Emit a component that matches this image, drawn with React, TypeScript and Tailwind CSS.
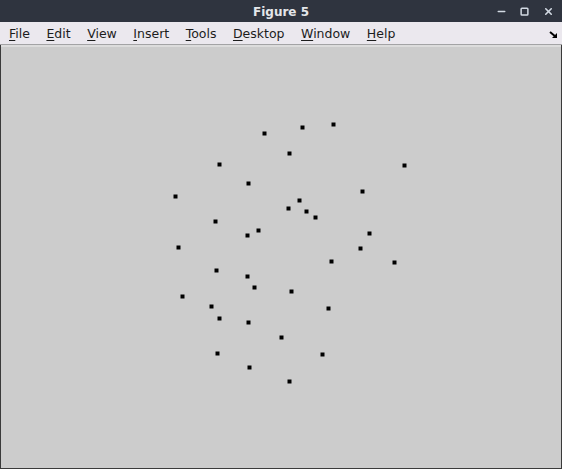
import { Minus, Square, X } from 'lucide-react';

const menus = ['File', 'Edit', 'View', 'Insert', 'Tools', 'Desktop', 'Window', 'Help'];

// marker positions in page coords (canvas starts at y=47)
const points: [number, number][] = [
  [264, 133], [302, 127], [333, 124], [289, 153], [219, 164], [404, 165],
  [248, 183], [362, 191], [175, 196], [299, 200], [288, 208], [306, 211],
  [315, 217], [215, 221], [258, 230], [369, 233], [247, 235], [178, 247],
  [360, 248], [331, 261], [394, 262], [216, 270], [247, 276], [254, 287],
  [291, 291], [182, 296], [211, 306], [328, 308], [219, 318], [248, 322],
  [281, 337], [217, 353], [322, 354], [249, 367], [289, 381],
];

const MenuItem = ({ label }: { label: string }) => (
  <span className="px-[8.25px] text-[12.5px] text-[#1c1c1c]">
    <span className="underline underline-offset-2">{label[0]}</span>
    {label.slice(1)}
  </span>
);

export default function App() {
  return (
    <div className="w-[562px] h-[469px] flex flex-col bg-[#2f343f]" style={{ fontFamily: '"DejaVu Sans", sans-serif' }}>
      <div className="h-[22px] flex items-center relative shrink-0">
        <div className="flex-1 text-center text-[12px] font-bold text-[#e4e6ea] pt-[1px]">Figure 5</div>
        <div className="absolute right-[8px] top-0 h-[22px] flex items-center gap-[12px] text-[#d3dae3]">
          <Minus size={11} strokeWidth={3.5} className="mr-[1px]" />
          <Square size={9} strokeWidth={4} className="mr-[2px]" />
          <X size={11} strokeWidth={3.5} />
        </div>
      </div>
      <div className="h-[22px] flex items-center bg-[#ebe8ee] shrink-0 pl-[0.75px] pt-[3px]">
        {menus.map((m) => (
          <MenuItem key={m} label={m} />
        ))}
        <div className="flex-1" />
        <svg width="10" height="10" viewBox="0 0 10 10" className="mr-[3px]">
          <path d="M1 2 L7 7" stroke="#000" strokeWidth="2" />
          <path d="M8 3 L8 8 L3 8 Z" fill="#000" />
        </svg>
      </div>
      <div className="h-[1px] bg-[#a3a3a5] shrink-0" />
      <div className="flex-1 flex flex-col px-[1px] pb-[1px] bg-[#3a3a3a]">
        <div className="h-[2px] bg-[#dcdcdc] shrink-0" />
        <div className="flex-1 bg-[#cccccc] relative">
          <svg className="absolute inset-0" width="560" height="421">
            {points.map(([x, y], i) => (
              <rect key={i} x={x - 1 - 1.5} y={y - 47 - 1.5} width="4" height="4" fill="#000" />
            ))}
          </svg>
        </div>
      </div>
    </div>
  );
}
